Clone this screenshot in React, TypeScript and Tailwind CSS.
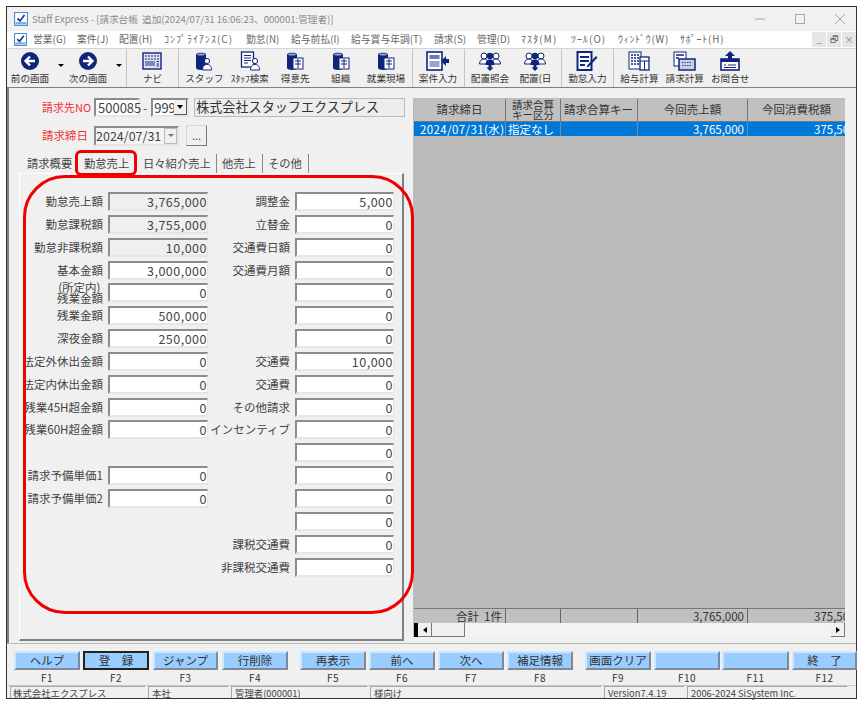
import type { ReactNode } from "react";

const NAVY = "#10257a";

const AppIcon = ({ size }: { size: number }) => (
  <svg width={size} height={size} viewBox="0 0 14 14">
    <rect x="0.500" y="0.500" width="13" height="13" fill="#fff" stroke="#4a90d2" strokeWidth="1.200" />
    <path d="M3.500 6.500l2.500 2.500 4.500-6" fill="none" stroke="#1c3f94" strokeWidth="1.800" />
    <rect x="1.500" y="10" width="11" height="2.500" fill="#7fb2e3" />
  </svg>
);

const ArrowIcon = ({ dir }: { dir: "l" | "r" }) => (
  <svg width="20" height="20" viewBox="0 0 20 20">
    <circle cx="10" cy="10" r="9" fill={NAVY} />
    <path
      d={dir === "l" ? "M15 10H6M10 5.500L5.500 10l4.500 4.500" : "M5 10h9M10 5.500l4.500 4.500-4.500 4.500"}
      fill="none"
      stroke="#fff"
      strokeWidth="2.400"
    />
  </svg>
);

const NaviIcon = () => (
  <svg width="20" height="20" viewBox="0 0 20 20">
    <rect x="1" y="2" width="18" height="16" fill="#dfe3f2" stroke={NAVY} strokeWidth="1.400" />
    <path d="M3 5h14M3 8h14" stroke={NAVY} strokeWidth="1.200" strokeDasharray="2 1" />
    <rect x="3" y="10" width="10" height="5" fill="#7d88bb" />
    <path d="M14.500 10.500h2.500M14.500 13h2.500M14.500 15h2.500" stroke={NAVY} />
  </svg>
);

const Roll = () => (
  <>
    <path d="M2 3.500C2 1 12 1 12 3.500V17C12 19.500 2 19.500 2 17Z" fill={NAVY} />
    <ellipse cx="7" cy="3.500" rx="3.800" ry="1.100" fill="#9aa6d8" />
  </>
);

const PersonBit = ({ x = 0 }: { x?: number }) => (
  <g transform={`translate(${x} 0)`}>
    <circle cx="13" cy="10" r="2.600" fill="#fff" stroke={NAVY} />
    <path d="M8.500 19c0-4 2-5.500 4.500-5.500s4.500 1.500 4.500 5.500Z" fill="#fff" stroke={NAVY} />
  </g>
);

const StaffIcon = () => (
  <svg width="20" height="20" viewBox="0 0 20 20">
    <Roll />
    <PersonBit />
  </svg>
);

const SearchStaffIcon = () => (
  <svg width="20" height="20" viewBox="0 0 20 20">
    <rect x="1.500" y="1" width="12" height="15" fill="#fff" stroke={NAVY} strokeWidth="1.300" />
    <path d="M4 4.500h7M4 7h7M4 9.500h7M4 12h4" stroke={NAVY} />
    <PersonBit x={2} />
  </svg>
);

const CompanyIcon = () => (
  <svg width="20" height="20" viewBox="0 0 20 20">
    <Roll />
    <rect x="8" y="7" width="10" height="11" fill="#fff" stroke={NAVY} />
    <path d="M10 10h6M10 13h6M13 8v9" stroke={NAVY} />
  </svg>
);

const CaseIcon = () => (
  <svg width="24" height="20" viewBox="0 0 24 20">
    <rect x="1" y="1" width="15" height="18" fill="#fff" stroke={NAVY} strokeWidth="1.600" />
    <rect x="3.500" y="4" width="10" height="4" fill="#6c79b5" />
    <rect x="3.500" y="10" width="10" height="6" fill="#9aa4d0" />
    <path d="M23 8v4h-3v3l-5-5 5-5v3Z" fill={NAVY} />
  </svg>
);

const AssignIcon = () => (
  <svg width="24" height="20" viewBox="0 0 24 20">
    <circle cx="6" cy="5" r="3" fill="#fff" stroke={NAVY} />
    <circle cx="18" cy="5" r="3" fill="#fff" stroke={NAVY} />
    <path d="M1.500 13c0-3 2-5 4.500-5s4.500 2 4.500 5ZM13.500 13c0-3 2-5 4.500-5s4.500 2 4.500 5Z" fill="#fff" stroke={NAVY} />
    <circle cx="12" cy="5" r="3.200" fill={NAVY} />
    <path d="M7.500 14c0-4 2-5.500 4.500-5.500s4.500 1.500 4.500 5.500Z" fill={NAVY} />
    <path d="M10.500 14h3v2.500H15.500l-3.500 3.500-3.500-3.500h2Z" fill={NAVY} />
  </svg>
);

const AttendIcon = () => (
  <svg width="22" height="20" viewBox="0 0 22 20">
    <rect x="1.500" y="1" width="14" height="18" fill="#fff" stroke={NAVY} strokeWidth="2" />
    <path d="M4 6h9M4 10h9M4 14h5" stroke={NAVY} strokeWidth="1.800" />
    <path d="M20 5l1.500 1.500L13 15.500l-2.500 1 1-2.500Z" fill={NAVY} />
  </svg>
);

const PayIcon = () => (
  <svg width="22" height="20" viewBox="0 0 22 20">
    <rect x="1" y="1" width="12" height="17" fill="#fff" stroke={NAVY} />
    <path d="M3 4h8M3 7h8M3 10h8M3 13h8" stroke={NAVY} strokeWidth="1.600" strokeDasharray="2 1" />
    <rect x="12" y="6" width="9" height="13" fill="#fff" stroke={NAVY} strokeWidth="1.300" />
    <path d="M12 10h9M16.500 10v9" stroke={NAVY} />
  </svg>
);

const BillIcon = () => (
  <svg width="24" height="20" viewBox="0 0 24 20">
    <rect x="1" y="1" width="12" height="14" fill="#fff" stroke={NAVY} />
    <path d="M3 4h8M3 7h3" stroke={NAVY} strokeWidth="1.500" />
    <rect x="6" y="8" width="16" height="11" fill="#c9cfe8" stroke={NAVY} strokeWidth="1.500" />
    <path d="M9 11.500h10M9 14.500h10" stroke="#445" strokeDasharray="1.500 1" />
  </svg>
);

const InquiryIcon = () => (
  <svg width="22" height="20" viewBox="0 0 22 20">
    <path d="M11 0l5 5h-3v3H9V5H6Z" fill={NAVY} />
    <rect x="2" y="8" width="18" height="11" fill="#fff" stroke={NAVY} strokeWidth="1.600" />
    <rect x="2" y="8" width="18" height="3" fill={NAVY} />
    <path d="M5 14h2M9 14h8M5 16.500h12" stroke={NAVY} />
  </svg>
);

const tools: { label: string; icon: ReactNode; small?: boolean }[][] = [
  [{ label: "ナビ", icon: <NaviIcon /> }],
  [
    { label: "スタッフ", icon: <StaffIcon /> },
    { label: "ｽﾀｯﾌ検索", icon: <SearchStaffIcon />, small: true },
    { label: "得意先", icon: <CompanyIcon /> },
    { label: "組織", icon: <CompanyIcon /> },
    { label: "就業現場", icon: <CompanyIcon /> },
  ],
  [{ label: "案件入力", icon: <CaseIcon /> }],
  [
    { label: "配置照会", icon: <AssignIcon /> },
    { label: "配置(日", icon: <AssignIcon /> },
  ],
  [{ label: "勤怠入力", icon: <AttendIcon /> }],
  [
    { label: "給与計算", icon: <PayIcon /> },
    { label: "請求計算", icon: <BillIcon /> },
    { label: "お問合せ", icon: <InquiryIcon /> },
  ],
];

const menus: [string, string][] = [
  ["営業(G)", "w-[44px]"],
  ["案件(J)", "w-[42px]"],
  ["配置(H)", "w-[45px]"],
  ["ｺﾝﾌﾟﾗｲｱﾝｽ(C)", "w-[82px] tracking-[1.100px]"],
  ["勤怠(N)", "w-[45px]"],
  ["給与前払(I)", "w-[60px]"],
  ["給与賞与年調(T)", "w-[83px]"],
  ["請求(S)", "w-[43px]"],
  ["管理(D)", "w-[44px]"],
  ["ﾏｽﾀ(M)", "w-[50px] tracking-[1.200px]"],
  ["ﾂｰﾙ(O)", "w-[47px] tracking-[1.100px]"],
  ["ｳｨﾝﾄﾞｳ(W)", "w-[62px] tracking-[0.800px]"],
  ["ｻﾎﾟｰﾄ(H)", "w-[50px] tracking-[0.900px]"],
];

type Cell = { label?: string; value: string; readOnly?: boolean };

const rows: { left?: Cell; right: Cell }[] = [
  { left: { label: "勤怠売上額", value: "3,765,000", readOnly: true }, right: { label: "調整金", value: "5,000" } },
  { left: { label: "勤怠課税額", value: "3,755,000", readOnly: true }, right: { label: "立替金", value: "0" } },
  { left: { label: "勤怠非課税額", value: "10,000", readOnly: true }, right: { label: "交通費日額", value: "0" } },
  { left: { label: "基本金額", value: "3,000,000" }, right: { label: "交通費月額", value: "0" } },
  { left: { label: "(所定内) \n残業金額", value: "0" }, right: { value: "0" } },
  { left: { label: "残業金額", value: "500,000" }, right: { value: "0" } },
  { left: { label: "深夜金額", value: "250,000" }, right: { value: "0" } },
  { left: { label: "法定外休出金額", value: "0" }, right: { label: "交通費", value: "10,000" } },
  { left: { label: "法定内休出金額", value: "0" }, right: { label: "交通費", value: "0" } },
  { left: { label: "残業45H超金額", value: "0" }, right: { label: "その他請求", value: "0" } },
  { left: { label: "残業60H超金額", value: "0" }, right: { label: "インセンティブ", value: "0" } },
  { right: { value: "0" } },
  { left: { label: "請求予備単価1", value: "0" }, right: { value: "0" } },
  { left: { label: "請求予備単価2", value: "0" }, right: { value: "0" } },
  { right: { value: "0" } },
  { right: { label: "課税交通費", value: "0" } },
  { right: { label: "非課税交通費", value: "0" } },
];

const fkeys: [string, string, string][] = [
  ["ヘルプ", "F1", "w-[66px] mr-[3px]"],
  ["登　録", "F2", "w-[66px] mr-[4px]"],
  ["ジャンプ", "F3", "w-[65px] mr-[4px]"],
  ["行削除", "F4", "w-[66px] mr-[12px]"],
  ["再表示", "F5", "w-[66px] mr-[3px]"],
  ["前へ", "F6", "w-[66px] mr-[3px]"],
  ["次へ", "F7", "w-[66px] mr-[3px]"],
  ["補足情報", "F8", "w-[66px] mr-[12px]"],
  ["画面クリア", "F9", "w-[66px] mr-[3px]"],
  ["", "F10", "w-[66px] mr-[2px]"],
  ["", "F11", "w-[67px] mr-[3px]"],
  ["終　了", "F12", "w-[65px]"],
];

function Field({ value, readOnly }: { value: string; readOnly?: boolean }) {
  return (
    <div
      className={`h-[19px] border-b-2 border-l-2 border-r border-t-2 border-t-[#8c8c8c] border-l-[#8c8c8c] border-r-[#e6e6e6] border-b-[#e6e6e6] text-right text-[12.500px] leading-[15px] tracking-[0.500px] text-[#444] ${
        readOnly ? "bg-[#efefef]" : "bg-white"
      }`}
    >
      {value}
    </div>
  );
}

function Label({ text }: { text?: string }) {
  if (!text) return <div />;
  return (
    <div className="whitespace-pre pr-[5px] text-right text-[11.500px] leading-[11px] text-[#444]">{text}</div>
  );
}

function GridCell({ children, className }: { children: ReactNode; className: string }) {
  return (
    <div className={`flex h-[22px] shrink-0 items-center overflow-hidden whitespace-nowrap border-r border-[#777] px-[3px] text-[11.500px] text-[#333] ${className}`}>
      {children}
    </div>
  );
}

export default function App() {
  return (
    <div className="h-[703px] w-[861px] overflow-hidden bg-white pl-[6px] pt-[6px] font-['Noto_Sans_CJK_JP','Noto_Sans',sans-serif]">
      <div className="flex h-[693px] w-[851px] flex-col border border-[#333] bg-[#f0f0f0]">
        {/* Title bar */}
        <div className="flex h-[24px] shrink-0 items-center bg-[#f1f1f1] pl-[7px]">
          <AppIcon size={14} />
          <span className="ml-[4px] whitespace-nowrap text-[9.600px] text-[#8a8a8a]">
            Staff Express - [請求台帳&nbsp;&nbsp;追加(2024/07/31 16:06:23、000001:管理者)]
          </span>
          <div className="ml-auto flex items-center gap-[30px] pr-[11px]">
            <svg width="10" height="10" viewBox="0 0 10 10">
              <path d="M0 5h10" stroke="#aaa" />
            </svg>
            <svg width="10" height="10" viewBox="0 0 10 10">
              <rect x="0.500" y="0.500" width="9" height="9" fill="none" stroke="#aaa" />
            </svg>
            <svg width="10" height="10" viewBox="0 0 10 10">
              <path d="M0 0l10 10M10 0L0 10" stroke="#aaa" />
            </svg>
          </div>
        </div>

        {/* Menu */}
        <div className="flex h-[17px] shrink-0 items-center bg-white pl-[7px]">
          <AppIcon size={13} />
          <div className="ml-[6px] flex">
            {menus.map(([name, w]) => (
              <span key={name} className={`${w} shrink-0 whitespace-nowrap text-[9.800px] text-[#666]`}>
                {name}
              </span>
            ))}
          </div>
          <div className="ml-auto flex h-[15px] gap-[1px]">
            {["_", "🗗", "×"].map((c) => (
              <span key={c} className="flex w-[14px] items-center justify-center bg-[#e6e6e6] text-[9px] leading-none text-[#777]">
                {c}
              </span>
            ))}
          </div>
        </div>

        {/* Toolbar */}
        <div className="flex h-[40px] shrink-0 items-stretch border-y border-[#d4d4d4] border-b-[#808080] bg-[#f0f0f0] pl-[1px]">
          <div className="mr-[2px] flex">
            {[
              { l: "前の画面", d: "l" as const },
              { l: "次の画面", d: "r" as const },
            ].map((b) => (
              <div key={b.l} className="relative flex w-[58px] flex-col items-center pr-[14px] pt-[2px]">
                <ArrowIcon dir={b.d} />
                <span className="whitespace-nowrap text-[9.600px] leading-[14px] text-[#333]">{b.l}</span>
                <span className="absolute right-[2px] top-[15px] h-0 w-0 border-x-[3px] border-t-[3px] border-x-transparent border-t-black" />
              </div>
            ))}
          </div>
          {tools.map((group, i) => (
            <div key={i} className="flex border-l border-[#c4c4c4] px-[2.800px]">
              {group.map((t) => (
                <div key={t.label} className="flex w-[45.400px] flex-col items-center pt-[2px]">
                  <div className="flex h-[20px] items-center">{t.icon}</div>
                  <span
                    className={`whitespace-nowrap leading-[14px] text-[#333] ${
                      t.small ? "text-[9.500px]" : "text-[9.600px]"
                    }`}
                  >
                    {t.label}
                  </span>
                </div>
              ))}
            </div>
          ))}
        </div>

        {/* Client */}
        <div className="flex min-h-0 flex-1 border-l-2 border-[#808080] bg-[#f0f0f0]">
          {/* Left side */}
          <div className="relative w-[404px] shrink-0">
            <div className="flex items-center pl-[33px] pt-[10px]">
              <span className="w-[49px] whitespace-nowrap text-[11px] text-[#f03030]">請求先NO</span>
              <div className="ml-[3px] h-[19px] w-[46px] border-2 border-t-[#8c8c8c] border-l-[#8c8c8c] border-r-[#e6e6e6] border-b-[#e6e6e6] bg-white pl-[2px] text-[13px] leading-[15px] text-[#444]">
                500085
              </div>
              <span className="mx-[3px] text-[12px] leading-none text-[#444]">-</span>
              <div className="relative ml-[1px] h-[19px] w-[38px] border-2 border-t-[#8c8c8c] border-l-[#8c8c8c] border-r-[#e6e6e6] border-b-[#e6e6e6] bg-white pl-[1px] text-[13px] leading-[15px] text-[#444]">
                999
                <span className="absolute right-0 top-0 flex h-[15px] w-[13px] items-center justify-center border-b border-r border-[#555] bg-[#f0f0f0]">
                  <span className="h-0 w-0 border-x-[3px] border-t-[4px] border-x-transparent border-t-black" />
                </span>
              </div>
              <div className="ml-[5px] h-[19px] w-[211px] whitespace-nowrap border border-[#bbb] bg-[#ededed] pl-[1px] text-[13.100px] leading-[16px] text-[#333]">
                株式会社スタッフエクスプレス
              </div>
            </div>

            <div className="flex items-center pl-[33px] pt-[8px]">
              <span className="w-[49px] whitespace-nowrap text-[11.500px] text-[#f03030]">請求締日</span>
              <div className="relative ml-[3px] h-[20px] w-[85px] border-2 border-t-[#8c8c8c] border-l-[#8c8c8c] border-r-[#e6e6e6] border-b-[#e6e6e6] bg-[#f4f4f4] text-[12.500px] leading-[16px] text-[#444]">
                2024/07/31
                <span className="absolute right-0 top-0 flex h-[16px] w-[13px] items-center justify-center border border-[#bbb] bg-[#f0f0f0]">
                  <span className="h-0 w-0 border-x-[3px] border-t-[3px] border-x-transparent border-t-[#777]" />
                </span>
              </div>
              <div className="ml-[7px] flex h-[21px] w-[21px] items-center justify-center border border-[#d8d8d8] border-b-[#777] border-r-[#777] text-[11px] leading-none text-[#444]">
                ...
              </div>
            </div>

            {/* Tabs */}
            <div className="mt-[8px] flex h-[19px] items-stretch pl-[18px] text-[11.300px] leading-none text-[#444]">
              <span className="flex w-[57px] items-center whitespace-nowrap">請求概要</span>
              <span className="flex w-[59px] items-center whitespace-nowrap">勤怠売上</span>
              <span className="flex w-[74px] items-center whitespace-nowrap border-r border-[#888]">日々紹介売上</span>
              <span className="ml-[5px] flex w-[41px] items-center whitespace-nowrap border-r border-[#888]">他売上</span>
              <span className="ml-[5px] flex w-[41px] items-center whitespace-nowrap border-r border-[#888]">その他</span>
            </div>

            {/* Tab panel */}
            <div className="ml-[10px] h-[468px] w-[385px] border-b-2 border-l border-r-2 border-t border-b-[#808080] border-l-white border-r-[#808080] border-t-white bg-[#f0f0f0] pt-[18px]">
              {rows.map((r, i) => (
                <div key={i} className="grid h-[22.850px] grid-cols-[88px_100px_87px_99px] items-start">
                  {r.left ? (
                    <div className="flex h-[19px] items-center justify-end">
                      <Label text={r.left.label} />
                    </div>
                  ) : (
                    <div />
                  )}
                  {r.left ? <Field value={r.left.value} readOnly={r.left.readOnly} /> : <div />}
                  <div className="flex h-[19px] items-center justify-end">
                    <Label text={r.right.label} />
                  </div>
                  <Field value={r.right.value} />
                </div>
              ))}
            </div>

            {/* red markers */}
            <div className="pointer-events-none absolute left-[66px] top-[62px] h-[26px] w-[62px] rounded-[6px] border-[3px] border-[#f00000]" />
            <div className="pointer-events-none absolute left-[14px] top-[87px] h-[439px] w-[391px] rounded-[42px] border-[3px] border-[#f00000]" />
          </div>

          {/* Right grid */}
          <div className="mt-[10px] flex h-[539px] w-[432px] flex-col overflow-hidden border-l border-t border-[#bcbcbc] bg-[#bbbbbb]">
            <div className="flex h-[23px] shrink-0 border-b border-[#777] bg-[#c0c0c0]">
              <GridCell className="w-[92px] justify-center">請求締日</GridCell>
              <div className="flex h-[22px] w-[55px] shrink-0 items-center justify-center whitespace-pre border-r border-[#777] text-center text-[10.500px] leading-[10px] text-[#333]">
                {"請求合算\nキー区分"}
              </div>
              <GridCell className="w-[77px]">請求合算キー</GridCell>
              <GridCell className="w-[110px] justify-center">今回売上額</GridCell>
              <GridCell className="w-[98px] justify-center">今回消費税額</GridCell>
            </div>
            <div className="flex h-[14px] shrink-0 bg-[#0078d7] text-[11.500px] leading-[14px] text-white">
              <div className="w-[92px] shrink-0 overflow-hidden whitespace-nowrap border-r border-[#6c8fb0] pl-[6px] tracking-[0.400px]">2024/07/31(水)</div>
              <div className="w-[55px] shrink-0 border-r border-[#6c8fb0] pl-[2px]">指定なし</div>
              <div className="w-[77px] shrink-0 border-r border-[#6c8fb0]" />
              <div className="w-[110px] shrink-0 border-r border-[#6c8fb0] pr-[3px] text-right">3,765,000</div>
              <div className="w-[98px] shrink-0 overflow-hidden whitespace-nowrap pl-[66px]">375,500</div>
            </div>
            <div className="flex-1" />
            <div className="flex h-[15px] shrink-0 border-t border-[#777] bg-[#c0c0c0] text-[11.500px] leading-[14px] text-[#333]">
              <div className="w-[92px] shrink-0 border-r border-[#666] pr-[3px] text-right">合計&nbsp;&nbsp;1件</div>
              <div className="w-[55px] shrink-0 border-r border-[#666]" />
              <div className="w-[77px] shrink-0 border-r border-[#666]" />
              <div className="w-[110px] shrink-0 border-r border-[#666] pr-[3px] text-right">3,765,000</div>
              <div className="w-[98px] shrink-0 overflow-hidden whitespace-nowrap pl-[66px]">375,500</div>
            </div>
            <div className="flex h-[14px] shrink-0 items-stretch bg-[#f3f3f3]">
              <div className="w-[4px] bg-black" />
              <div className="flex w-[14px] items-center justify-center border-b border-r border-[#777] bg-[#f0f0f0]">
                <span className="h-0 w-0 border-y-[3px] border-r-[4px] border-y-transparent border-r-black" />
              </div>
              <div className="w-[33px] border-b border-r border-[#777] bg-[#f0f0f0]" />
              <div className="flex-1" />
              <div className="flex w-[14px] items-center justify-center border-b border-r border-[#777] bg-[#f0f0f0]">
                <span className="h-0 w-0 border-y-[3px] border-l-[4px] border-y-transparent border-l-black" />
              </div>
            </div>
          </div>
        </div>

        {/* Function keys */}
        <div className="flex h-[42px] shrink-0 border-t border-[#b8b8b8] bg-[#f0f0f0] pl-[7px] pt-[7px]">
          {fkeys.map(([name, key, cls]) => (
            <div key={key} className={`flex shrink-0 flex-col items-center ${cls}`}>
              <div
                className={`flex h-[19px] w-full items-center justify-center whitespace-pre border-2 bg-[#99ccff] text-[11.500px] leading-none text-[#333] ${
                  key === "F2"
                    ? "border-[#222]"
                    : "border-b-[#7f8a96] border-l-[#cfe6ff] border-r-[#7f8a96] border-t-[#cfe6ff]"
                }`}
              >
                {name}
              </div>
              <span className="mt-[2px] text-[10px] leading-[12px] tracking-[0.500px] text-[#333]">{key}</span>
            </div>
          ))}
        </div>

        {/* Status bar */}
        <div className="flex h-[13px] shrink-0 gap-[3px] border-t border-[#c8c8c8] pl-[3px] text-[9.400px] leading-[12px] text-[#444]">
          <div className="w-[135px] shrink-0 whitespace-nowrap border-l border-t border-[#a8a8a8] pl-[2px]">株式会社エクスプレス</div>
          <div className="w-[80px] shrink-0 border-l border-t border-[#a8a8a8] pl-[3px]">本社</div>
          <div className="w-[136px] shrink-0 border-l border-t border-[#a8a8a8] pl-[3px]">管理者(000001)</div>
          <div className="w-[231px] shrink-0 border-l border-t border-[#a8a8a8] pl-[3px]">様向け</div>
          <div className="w-[80px] shrink-0 whitespace-nowrap border-l border-t border-[#a8a8a8] pl-[3px]">Version7.4.19</div>
          <div className="w-[160px] shrink-0 whitespace-nowrap border-l border-t border-[#a8a8a8] pl-[3px]">2006-2024 SiSystem Inc.</div>
        </div>
      </div>
    </div>
  );
}
